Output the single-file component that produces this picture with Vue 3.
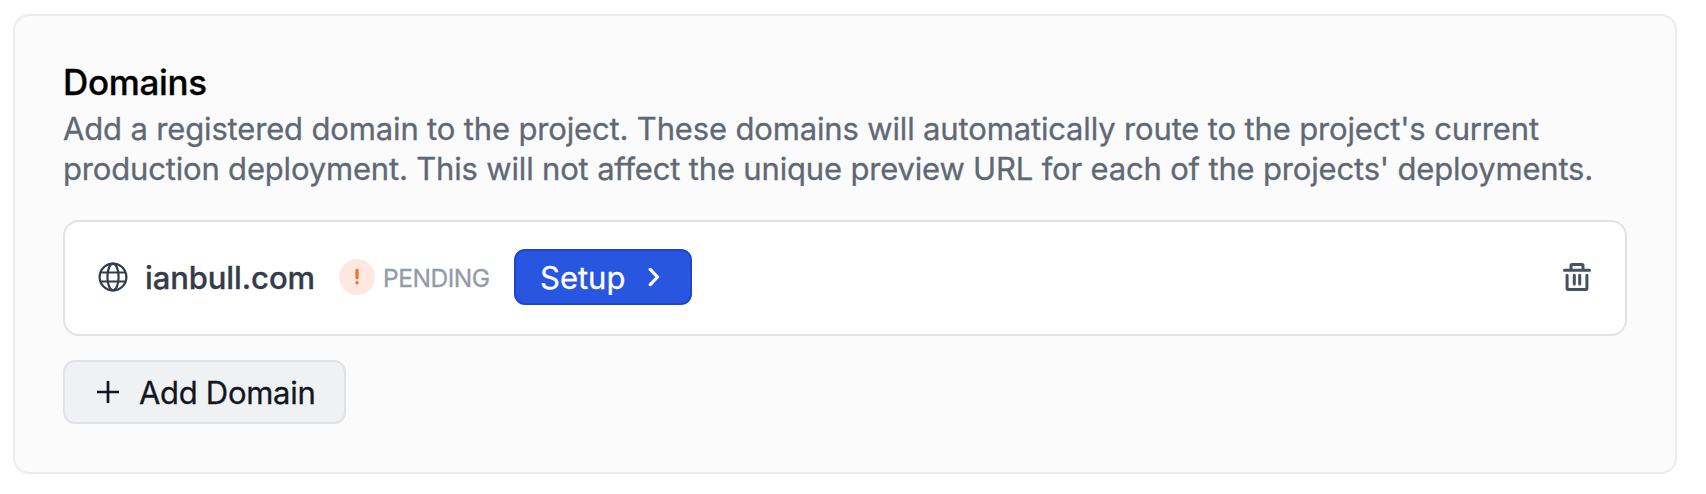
<script setup>
const domain = { name: 'ianbull.com', status: 'PENDING' }
</script>

<template>
  <main class="page">
    <section class="card">
      <h2 class="title">Domains</h2>
      <p class="desc">
        <span class="line first">Add a registered domain to the project. These domains will automatically route to the project's current</span>
        <span class="line second">production deployment. This will not affect the unique preview URL for each of the projects' deployments.</span>
      </p>
      <div class="row">
        <svg class="globe" viewBox="0 0 32 32" width="32" height="32">
          <circle cx="16" cy="16" r="13.4" />
          <ellipse cx="16" cy="16" rx="5.6" ry="13.4" />
          <path d="M3.6 11.5h24.8M3.6 20.5h24.8" />
        </svg>
        <span class="name">{{ domain.name }}</span>
        <span class="alert">
          <svg viewBox="0 0 36 36" width="36" height="36">
            <path d="M18 11.4v7.2" />
            <circle cx="18" cy="23.8" r="1.7" />
          </svg>
        </span>
        <span class="status">{{ domain.status }}</span>
        <button class="setup">
          <span class="label">Setup</span>
          <svg viewBox="0 0 12 20" width="12" height="20"><path d="M2.2 2.4 9.6 10l-7.4 7.6" /></svg>
        </button>
        <button class="trash" aria-label="Delete">
          <svg viewBox="0 0 28 28" width="28" height="28">
            <path d="M1.5 7.2h25M8 7V2.6Q8 1.5 9.1 1.5h9.8Q20 1.5 20 2.6V7M4.1 12.3v13.2q0 1 1 1h17.8q1 0 1-1V12.3M11.3 12.3v8.6M16.7 12.3v8.6" />
          </svg>
        </button>
      </div>
      <button class="add">
        <svg viewBox="0 0 22 22" width="22" height="22"><path d="M11 0v22M0 11h22" /></svg>
        <span class="label">Add Domain</span>
      </button>
    </section>
  </main>
</template>

<style>
body {
  background: #fff;
}
</style>

<style scoped>
.page {
  box-sizing: border-box;
  height: 494px;
  padding: 14px 29px 20px 13px;
  font-family: Inter, "Liberation Sans", sans-serif;
  -webkit-text-stroke: 0.3px;
}
.card {
  box-sizing: border-box;
  height: 460px;
  padding: 48px;
  border: 2px solid #ebebf0;
  border-radius: 16px;
  background: #fbfbfb;
}
.title {
  margin: 0 0 9px;
  font-size: 35px;
  line-height: 36px;
  font-weight: 500;
  letter-spacing: -0.35px;
  color: #000;
}
.desc {
  margin: 0 0 31px;
  font-size: 31px;
  line-height: 40px;
  color: #606876;
}
.line {
  display: block;
  white-space: nowrap;
}
.first {
  letter-spacing: -0.155px;
}
.second {
  letter-spacing: -0.175px;
}
button {
  font: inherit;
}
svg {
  display: block;
  flex: none;
  fill: none;
  stroke: currentColor;
}
.row {
  box-sizing: border-box;
  display: flex;
  align-items: center;
  height: 116px;
  padding: 0 34px 2px 32px;
  border: 2px solid #e1e1e8;
  border-radius: 16px;
  background: #fff;
  color: #323c4b;
}
.globe {
  stroke-width: 2.2;
}
.name {
  width: 194px;
  margin-left: 16px;
  padding-top: 1px;
  font-size: 31px;
  line-height: 40px;
  font-weight: 500;
  letter-spacing: -0.1px;
  white-space: nowrap;
}
.alert {
  width: 36px;
  height: 36px;
  border-radius: 50%;
  background: #fee8df;
  color: #f96a2c;
}
.alert path {
  stroke-width: 3.2;
  stroke-linecap: round;
}
.alert circle {
  fill: currentColor;
  stroke: none;
}
.status {
  width: 131px;
  margin-left: 8px;
  padding-top: 2px;
  font-size: 24.5px;
  line-height: 36px;
  letter-spacing: -0.45px;
  color: #939ba8;
}
.setup {
  box-sizing: border-box;
  display: flex;
  align-items: center;
  width: 178px;
  height: 56px;
  padding: 0 30px 0 24px;
  justify-content: space-between;
  border: 2px solid #2044cb;
  border-radius: 11px;
  background: #2956e1;
  color: #fff;
  font-size: 31px;
  letter-spacing: 0;
}
.setup svg {
  stroke-width: 3.2;
  stroke-linecap: round;
  stroke-linejoin: round;
}
.trash {
  margin-left: auto;
  padding: 0;
  border: 0;
  background: none;
  color: #465161;
}
.trash svg {
  stroke-width: 3;
  stroke-linecap: round;
  stroke-linejoin: round;
}
.add {
  box-sizing: border-box;
  display: flex;
  align-items: center;
  gap: 20px;
  width: 283px;
  height: 64px;
  margin-top: 24px;
  padding: 0 0 0 32px;
  border: 2px solid #e1e2e7;
  border-radius: 12px;
  background: #f0f1f3;
  color: #111722;
  font-size: 31px;
  letter-spacing: -0.3px;
}
.add svg {
  stroke-width: 2.7;
}
.label {
  white-space: nowrap;
}
</style>
